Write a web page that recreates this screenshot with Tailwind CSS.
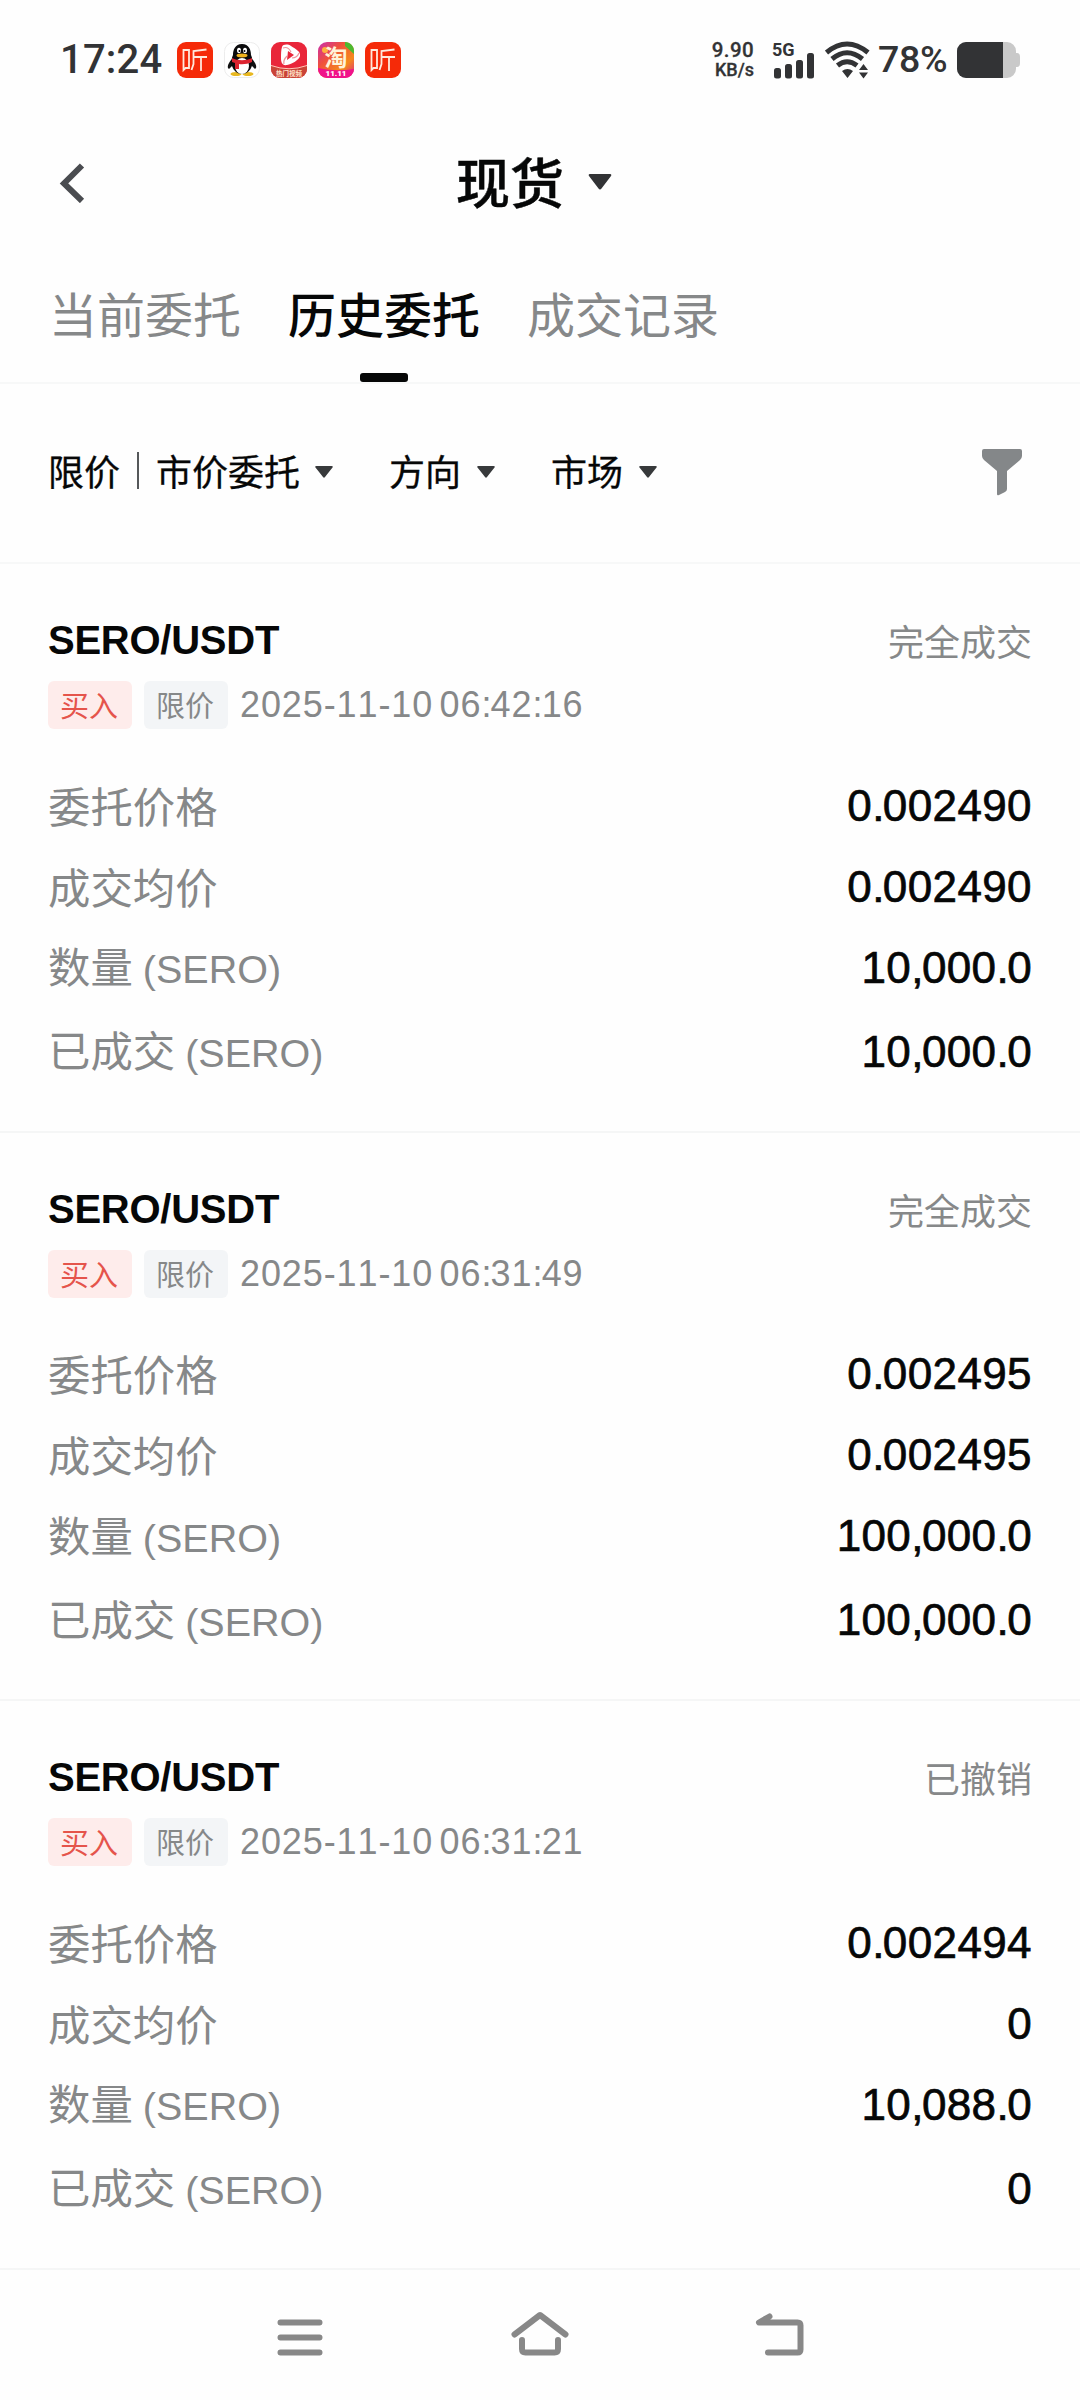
<!DOCTYPE html>
<html lang="zh-CN">
<head>
<meta charset="utf-8">
<title>历史委托</title>
<script src="https://cdn.jsdelivr.net/npm/@tailwindcss/browser@4"></script>
</head>
<body class="w-[1080px] h-[2400px] overflow-hidden bg-[#fefefe] font-['Noto_Sans_CJK_SC',sans-serif] text-[#060707]">
<header class="h-[120px] flex items-center pl-[60px] pr-[60px] text-[#323335] font-['Roboto',sans-serif]">
  <div class="w-[117px] text-[40px] leading-none font-medium tracking-[0.2px]">17:24</div>
  <div class="flex gap-[11px]">
    <svg class="size-9" viewBox="0 0 36 36"><rect width="36" height="36" rx="9" fill="#f52a08"/><g fill="none" stroke="#ffe9dc" stroke-width="1.8"><path d="M6.5 8h5.500v18H8.500L6.500 28z"/><path d="M29.500 7.500 16.500 9v13l-2 6M16.500 15H30M24 15v14"/></g></svg>
    <svg class="size-9" viewBox="0 0 36 36"><rect x=".5" y=".5" width="35" height="35" rx="9" fill="#fff" stroke="#ececec"/><path d="M8 17C4 21 2.500 26 5 27L8 24zM28 17c4 4 5.500 9 3 10l-3-3z" fill="#111"/><ellipse cx="12" cy="32" rx="5.500" ry="2" fill="#e8b820"/><ellipse cx="24" cy="32" rx="5.500" ry="2" fill="#e8b820"/><path d="M18 2C11 2 9 8 9 13c-3 6-2 18 9 19 11-1 12-13 9-19 0-5-2-11-9-11z" fill="#0b0b0d"/><ellipse cx="18" cy="24" rx="7" ry="8" fill="#fff"/><path d="M8 16c6 3 14 3 20 0v4c-4 2-9 2.500-13 2v5h-4v-6l-3-1z" fill="#dc2430"/><ellipse cx="15" cy="8.500" rx="2" ry="2.800" fill="#fff"/><ellipse cx="21" cy="8.500" rx="2" ry="2.800" fill="#fff"/><circle cx="15.500" cy="9" r="1"/><circle cx="20.500" cy="9" r="1"/><ellipse cx="18" cy="13.500" rx="5.500" ry="1.900" fill="#f0b31c"/></svg>
    <svg class="size-9" viewBox="0 0 36 36"><rect width="36" height="36" rx="9" fill="#e9263a"/><path d="M0 24Q18 30 36 24v3a9 9 0 0 1-9 9H9a9 9 0 0 1-9-9z" fill="#c94438"/><path d="M0 23.500Q18 30 36 23.500" fill="none" stroke="#ffc9b6"/><path d="M11 5c1-3 6-3 9-1 5 3 10 6 9 10s-8 8-13 9-6-3-6-7 0-8 1-11z" fill="#fff"/><path d="m17 9 6 4-7 5z" fill="#e9263a"/><path d="M12 6q5-2 8 4M28 11q-2 5-7 5M13 22q-1-4 3-8" fill="none" stroke="#f0939a" stroke-width="1.200"/><text x="18" y="33.500" font-size="6.500" font-weight="700" fill="#ffe3cc" text-anchor="middle" font-family="Noto Sans CJK SC">热门视频</text></svg>
    <svg class="size-9" viewBox="0 0 36 36"><defs><linearGradient id="tb" x1="0" y1="0" x2="1" y2="1"><stop offset="0" stop-color="#c92cb0"/><stop offset=".35" stop-color="#f0503c"/><stop offset=".7" stop-color="#f58a1c"/><stop offset="1" stop-color="#d9208c"/></linearGradient></defs><rect width="36" height="36" rx="9" fill="url(#tb)"/><path d="M27 0c5 0 9 4 9 9v3l-9-8z" fill="#4cba2f"/><path d="M0 26q18 4 36 1a9 9 0 0 1-9 9H9a9 9 0 0 1-9-9z" fill="#f0128a"/><circle cx="7" cy="8" r="3" fill="#ffb13d"/><text x="18" y="23.500" font-size="23" font-weight="700" fill="#fff3d9" text-anchor="middle" font-family="Noto Sans CJK SC">淘</text><text x="18" y="34" font-size="8" font-weight="900" fill="#fff" text-anchor="middle" font-family="Roboto">11.11</text></svg>
    <svg class="size-9" viewBox="0 0 36 36"><rect width="36" height="36" rx="9" fill="#f52a08"/><g fill="none" stroke="#ffe9dc" stroke-width="1.800"><path d="M6.500 8h5.500v18H8.500L6.500 28z"/><path d="M29.500 7.500 16.500 9v13l-2 6M16.500 15H30M24 15v14"/></g></svg>
  </div>
  <div class="ml-auto w-[41px] flex flex-col items-end font-medium text-center">
    <div class="text-[20.5px] leading-[20px] tracking-[0.4px] [-webkit-text-stroke:0.3px]">9.90</div>
    <div class="text-[18px] leading-[20px] [-webkit-text-stroke:0.3px]">KB/s</div>
  </div>
  <svg class="ml-[18px] w-[44px] h-[38px]" viewBox="0 0 44 38"><text x="0" y="14.500" font-size="18" font-weight="700" font-family="Roboto" fill="#323335">5G</text><g fill="#323335"><rect x="2" y="27" width="7" height="10.500" rx="2.500"/><rect x="13" y="23" width="7" height="14.500" rx="2.500"/><rect x="24" y="19" width="7" height="18.500" rx="2.500"/><rect x="35" y="12" width="7" height="25.500" rx="2.500"/></g></svg>
  <svg class="ml-[9px] w-[46px] h-[38px]" viewBox="0 0 46 38"><g fill="none" stroke="#323335" stroke-width="5"><path d="M1.500 11.500Q22-5.500 43 11.500"/><path d="M7 18Q22 5.500 37.500 18"/><path d="M12.500 24.500q9.500-7.500 19.500 0"/></g><path d="M17 30q5.500-4 11 0l-5.500 7zM34 29l4.500-6 4.500 6zM34 31.500l4.500 6 4.500-6z" fill="#323335"/></svg>
  <div class="ml-[7px] w-[79px] text-[37.5px] leading-none font-medium tracking-[-0.3px]">78%</div>
  <svg class="w-[63px] h-[38px]" viewBox="0 0 63 38"><path d="M0 10a9 9 0 0 1 9-9h41a9 9 0 0 1 9 9v2h1q3 0 3 4v6q0 4-3 4h-1v2a9 9 0 0 1-9 9H9a9 9 0 0 1-9-9z" fill="#c9c9c9"/><path d="M46 1H9a9 9 0 0 0-9 9v18a9 9 0 0 0 9 9h37z" fill="#323335"/></svg>
</header>

<nav class="h-[126px] flex items-center pl-[59px] pr-[466px]">
  <svg class="w-7 h-10" viewBox="0 0 28 40" fill="none" stroke="#4a4c50" stroke-width="6"><path d="M23 2.500 5 20.500l18 17.500"/></svg>
  <div class="ml-[369px] flex items-center">
    <h1 class="-mt-[4px] text-[54px] leading-none font-medium [-webkit-text-stroke:0.5px]">现货</h1>
    <svg class="ml-[24px] -mt-[2px] w-6 h-4" viewBox="0 0 24 16"><path d="M2 0h20q2 0 1 2L13.500 14.500q-1.500 2-3 0L1 2Q0 0 2 0z" fill="#323335"/></svg>
  </div>
</nav>

<div class="h-[138px] flex items-start gap-[47px] pl-[49px] text-[48px] leading-[132px] border-b-2 border-[#f7f8f8] text-[#868889]">
  <div class="h-[136px]">当前委托</div>
  <div class="h-[136px] text-[#060707] font-medium relative">历史委托<i class="absolute left-[72px] bottom-0 w-12 h-[9px] rounded-[3px] bg-[#060707]"></i></div>
  <div class="h-[136px]">成交记录</div>
</div>

<div class="h-[180px] flex items-center pl-[48px] pr-[57px] pb-[2px] text-[36px] leading-none border-b-2 border-[#f7f8f8]">
  <div class="flex items-center -mt-[5px] [-webkit-text-stroke:0.3px]">限价<i class="mx-[17px] mt-[2px] w-[2px] h-[37px] bg-[#55585a]"></i>市价委托</div>
  <svg class="ml-[15px] w-[18px] h-3" viewBox="0 0 18 12"><path d="M1.500 0h15q2 0 1 1.500L10 11q-1 1.500-2 0L.5 1.500Q-.5 0 1.500 0z" fill="#37393b"/></svg>
  <div class="ml-[56px] -mt-[5px] [-webkit-text-stroke:0.3px]">方向</div>
  <svg class="ml-[16px] w-[18px] h-3" viewBox="0 0 18 12"><path d="M1.500 0h15q2 0 1 1.500L10 11q-1 1.500-2 0L.5 1.500Q-.5 0 1.500 0z" fill="#37393b"/></svg>
  <div class="ml-[56px] -mt-[5px] [-webkit-text-stroke:0.3px]">市场</div>
  <svg class="ml-[16px] w-[18px] h-3" viewBox="0 0 18 12"><path d="M1.500 0h15q2 0 1 1.500L10 11q-1 1.500-2 0L.5 1.500Q-.5 0 1.500 0z" fill="#37393b"/></svg>
  <svg class="ml-auto w-[42px] h-12" viewBox="0 0 42 48"><path d="M3 1h36q2 0 2 2v5q0 2-2 4L26 23v18q0 2-2 3l-6 3q-2 1-2-1V23L3 12q-2-2-2-4V3q0-2 2-2z" fill="#848789"/></svg>
</div>

<main id="orders"></main>

<footer class="h-[128px] flex items-center justify-center gap-[180px]">
  <svg class="w-[60px] h-[60px]" viewBox="0 0 60 60" fill="none" stroke="#888" stroke-width="6" stroke-linecap="round"><path d="M10.500 18.500h39M10.500 33.500h39M10.500 48.500h39"/></svg>
  <svg class="w-[60px] h-[60px]" viewBox="0 0 60 60" fill="none" stroke="#888" stroke-width="6" stroke-linecap="round" stroke-linejoin="round"><path d="M4.500 30.500 30 11l25.500 19.500M12 36v9q0 3.500 3.500 3.500h29q3.500 0 3.500-3.500v-9"/></svg>
  <svg class="w-[60px] h-[60px]" viewBox="0 0 60 60" fill="none" stroke="#888" stroke-width="6" stroke-linecap="round" stroke-linejoin="round"><path d="M19.500 12.500 9 18.500h38.500q3 0 3 3v24q0 3-3 3H18"/></svg>
</footer>

<script>
const orders = [
  { status: '完全成交', time: '2025-11-10 06:42:16', values: ['0.002490', '0.002490', '10,000.0', '10,000.0'] },
  { status: '完全成交', time: '2025-11-10 06:31:49', values: ['0.002495', '0.002495', '100,000.0', '100,000.0'] },
  { status: '已撤销', time: '2025-11-10 06:31:21', values: ['0.002494', '0', '10,088.0', '0'] },
];
const unit = '<span class="ml-[10px] text-[39.5px] font-[\'Liberation_Sans\',sans-serif]">(SERO)</span>';
const labels = ['委托价格', '成交均价', '数量' + unit, '已成交' + unit];
// Tighten the advance of separators inside figures
const figure = v => v.replace(/[.,]/g, '<span class="tracking-[-1.6px]">$&</span>');
const clock = t => t.replace(/:/g, '<span class="tracking-[-0.8px]">:</span>');
const row = (label, value) => `
  <div class="h-[81px] last:h-[87px] flex items-center justify-between">
    <div class="mt-[1px] flex items-baseline text-[42.4px] leading-none text-[#868889]">${label}</div>
    <div class="mt-[2px] text-[44px] leading-none tracking-[0.4px] font-['Liberation_Sans',sans-serif] [-webkit-text-stroke:0.7px]">${figure(value)}</div>
  </div>`;
document.getElementById('orders').innerHTML = orders.map(o => `
  <section class="h-[568.6px] px-[48px] pt-[48px] border-b-2 border-[#f5f6f6]">
    <div class="h-[56px] flex items-center justify-between">
      <h2 class="text-[40px] leading-none tracking-[-0.25px] font-bold font-['Liberation_Sans',sans-serif]">SERO/USDT</h2>
      <div class="text-[36px] leading-none text-[#868889]">${o.status}</div>
    </div>
    <div class="mt-[13px] h-12 flex items-center gap-3">
      <div class="w-[84px] h-12 rounded-md bg-[#feeceb] text-[#e5544b] text-[29px] leading-[46px] text-center"><span class="-ml-[2px]">买入</span></div>
      <div class="w-[84px] h-12 rounded-md bg-[#f3f5f7] text-[#868889] text-[29px] leading-[46px] text-center"><span class="-ml-[2px]">限价</span></div>
      <div class="text-[36px] leading-none text-[#868889] tracking-[0.9px] [font-kerning:none] [word-spacing:-4.5px] font-['Liberation_Sans',sans-serif]">${clock(o.time)}</div>
    </div>
    <div class="mt-[35px]">${labels.map((l, i) => row(l, o.values[i])).join('')}</div>
  </section>`).join('');
</script>
</body>
</html>
